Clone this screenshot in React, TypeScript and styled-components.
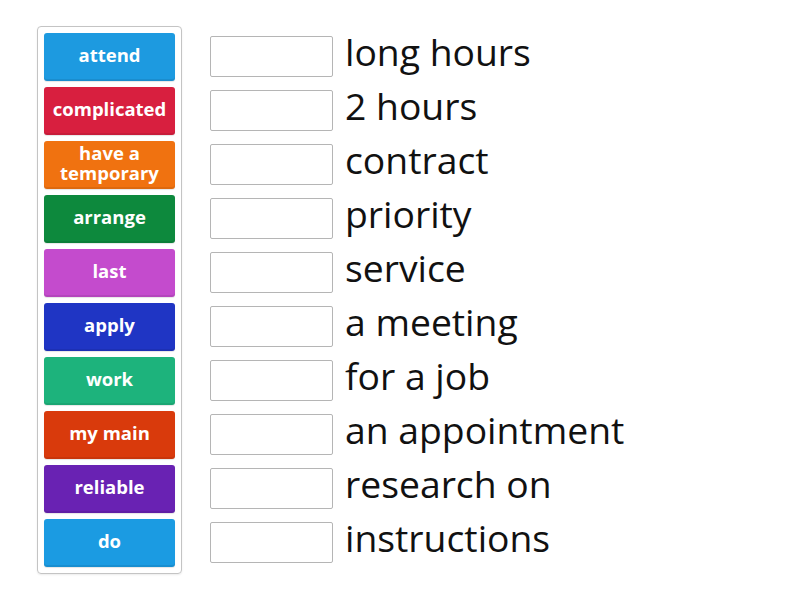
import React from "react";
import styled, { createGlobalStyle } from "styled-components";

const tiles = [
  { label: "attend", color: "#1d9ae0" },
  { label: "complicated", color: "#d81f3f" },
  { label: "have a temporary", color: "#f07210" },
  { label: "arrange", color: "#0d893d" },
  { label: "last", color: "#c44bcd" },
  { label: "apply", color: "#1f35c4" },
  { label: "work", color: "#1db37c" },
  { label: "my main", color: "#d93a0c" },
  { label: "reliable", color: "#6922b3" },
  { label: "do", color: "#1b9be2" },
];

const targets = [
  "long hours",
  "2 hours",
  "contract",
  "priority",
  "service",
  "a meeting",
  "for a job",
  "an appointment",
  "research on",
  "instructions",
];

const App: React.FC = () => {
  return (
    <>
      <GlobalStyle />
      <Page>
        <TilePanel>
          {tiles.map((t) => (
            <Tile key={t.label} $color={t.color}>
              {t.label}
            </Tile>
          ))}
        </TilePanel>
        <TargetList>
          {targets.map((text) => (
            <TargetRow key={text}>
              <DropBox />
              <TargetText>{text}</TargetText>
            </TargetRow>
          ))}
        </TargetList>
      </Page>
    </>
  );
};

export default App;

/* ------------------- Styled Components ------------------- */
const GlobalStyle = createGlobalStyle`
  html, body {
    margin: 0;
    padding: 0;
    background: #ffffff;
    font-family: "Open Sans", "Liberation Sans", sans-serif;
  }
`;

const Page = styled.div`
  display: flex;
  align-items: flex-start;
  gap: 28px;
  padding: 26px 0 0 37px;
  width: 800px;
  height: 600px;
  box-sizing: border-box;
`;

const TilePanel = styled.div`
  display: flex;
  flex-direction: column;
  gap: 6px;
  padding: 6px;
  border: 1px solid #c4c4c4;
  border-radius: 4px;
  box-shadow: 0 1px 2px rgba(0, 0, 0, 0.08);
`;

const Tile = styled.div<{ $color: string }>`
  width: 131px;
  height: 48px;
  box-sizing: border-box;
  display: flex;
  align-items: center;
  justify-content: center;
  text-align: center;
  padding: 0 4px 4px;
  border-radius: 3px;
  background: ${(p) => p.$color};
  box-shadow: inset 0 -2px 0 rgba(0, 0, 0, 0.08), 0 1px 1px rgba(0, 0, 0, 0.1);
  color: #ffffff;
  font-weight: 700;
  font-size: 18.5px;
  line-height: 20px;
`;

const TargetList = styled.div`
  display: flex;
  flex-direction: column;
  gap: 13px;
  padding-top: 10px;
`;

const TargetRow = styled.div`
  display: flex;
  align-items: center;
  gap: 12px;
  height: 41px;
`;

const DropBox = styled.div`
  width: 123px;
  height: 41px;
  box-sizing: border-box;
  border: 1px solid #b5b5b5;
  border-radius: 2px;
  background: #ffffff;
`;

const TargetText = styled.span`
  font-size: 37.3px;
  color: #111111;
  white-space: nowrap;
  margin-top: -10px;
`;
